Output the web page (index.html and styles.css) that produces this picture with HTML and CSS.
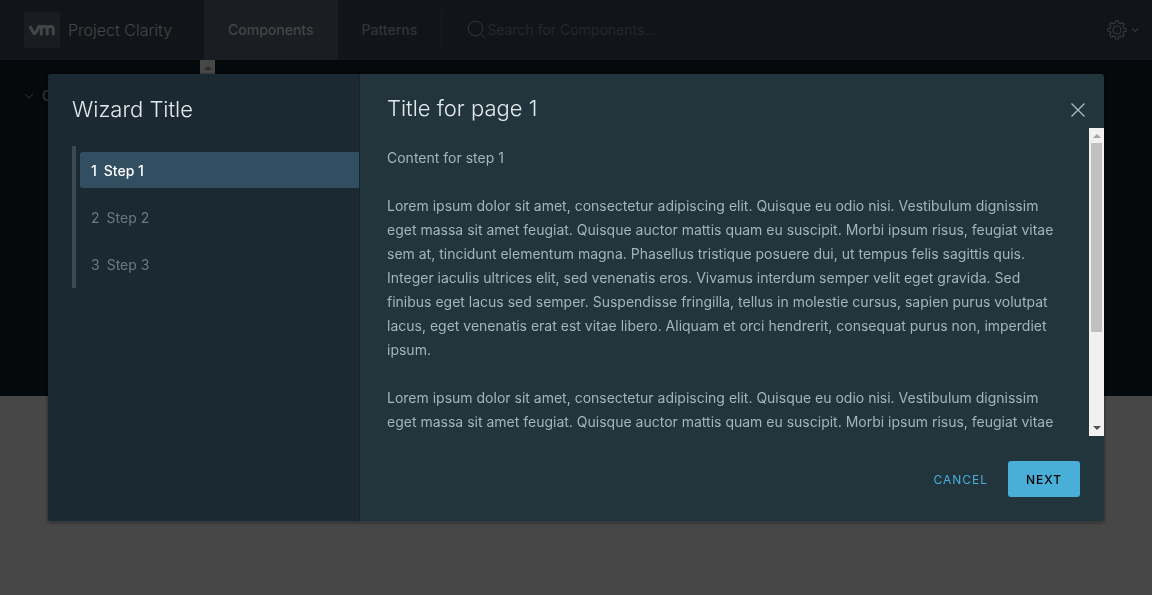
FILE: index.html
```
<!DOCTYPE html>
<html lang="en">
<head>
<meta charset="utf-8">
<meta name="viewport" content="width=device-width, initial-scale=1">
<title>Project Clarity</title>
<link rel="stylesheet" href="styles.css">
</head>
<body>
<header class="header">
  <a class="brand" href="#">
    <span class="logo">
      <svg viewBox="0 0 36 36" width="36" height="36" aria-hidden="true"><path d="M6.500 15.200L9.500 21Q10.500 22.500 11.500 21L14.900 14.600Q15.500 13.900 16.600 14.600Q17.200 15 17.200 16V22M17.200 17.500Q17.200 14.600 20 14.600H20.600Q23.200 14.600 23.200 17V22M23.200 17.500Q23.200 14.600 26 14.600Q29.300 14.600 29.300 17.500V22"/></svg>
    </span>
    <span class="brand-name">Project Clarity</span>
  </a>
  <nav class="header-nav">
    <a class="nav-link active" href="#">Components</a>
    <a class="nav-link" href="#">Patterns</a>
  </nav>
  <label class="search">
    <svg viewBox="0 0 20 20" width="20" height="20" aria-hidden="true"><circle cx="8.500" cy="8.500" r="7.300"/><path d="M13.800 14l4.500 4.800"/></svg>
    <input type="search" placeholder="Search for Components..." aria-label="Search for Components">
  </label>
  <button class="settings" type="button" aria-label="Settings">
    <svg viewBox="0 0 20 20" width="20" height="20" aria-hidden="true"><path d="M8.700 .8h2.600l.5 2.300 1.600.7 2-1.300 1.900 1.900-1.300 2 .7 1.600 2.400.6v2.600l-2.400.5-.7 1.700 1.300 2-1.900 1.800-2-1.300-1.600.7-.5 2.400H8.700l-.6-2.400-1.600-.7-2 1.300-1.900-1.800 1.300-2-.7-1.700-2.300-.5V8.600l2.300-.6.7-1.600-1.300-2 1.900-1.900 2 1.300 1.600-.7z"/><circle cx="10" cy="10" r="4"/></svg>
    <svg viewBox="0 0 8 8" width="8" height="8" aria-hidden="true"><path d="M1 2.500l3 3 3-3"/></svg>
  </button>
</header>
<main class="workspace">
  <aside class="sidenav">
    <button class="group" type="button">
      <svg viewBox="0 0 10 10" width="10" height="10" aria-hidden="true"><path d="M1 3l4 4 4-4"/></svg>
      <span>C</span>
    </button>
  </aside>
  <div class="side-scroll"><span class="arrow arrow-up"></span></div>
</main>
<div class="overlay">
  <section class="wizard" role="dialog" aria-modal="true" aria-labelledby="wizard-title">
    <aside class="stepnav">
      <h1 class="title" id="wizard-title">Wizard Title</h1>
      <ol class="steps">
        <li><button class="step current" type="button" aria-current="step"><span>1</span><span>Step 1</span></button></li>
        <li><button class="step" type="button" disabled><span>2</span><span>Step 2</span></button></li>
        <li><button class="step" type="button" disabled><span>3</span><span>Step 3</span></button></li>
      </ol>
    </aside>
    <div class="page">
      <div class="page-head">
        <h2 class="title">Title for page 1</h2>
        <button class="close" type="button" aria-label="Close">
          <svg viewBox="0 0 16 16" width="16" height="16" aria-hidden="true"><path d="M1.500 1.500l13 13M14.500 1.500l-13 13"/></svg>
        </button>
      </div>
      <div class="page-body">
        <div class="content">
          <p>Content for step 1</p>
          <p>Lorem ipsum dolor sit amet, consectetur adipiscing elit. Quisque eu odio nisi. Vestibulum dignissim eget massa sit amet feugiat. Quisque auctor mattis quam eu suscipit. Morbi ipsum risus, feugiat vitae sem at, tincidunt elementum magna. Phasellus tristique posuere dui, ut tempus felis sagittis quis. Integer iaculis ultrices elit, sed venenatis eros. Vivamus interdum semper velit eget gravida. Sed finibus eget lacus sed semper. Suspendisse fringilla, tellus in molestie cursus, sapien purus volutpat lacus, eget venenatis erat est vitae libero. Aliquam et orci hendrerit, consequat purus non, imperdiet ipsum.</p>
          <p>Lorem ipsum dolor sit amet, consectetur adipiscing elit. Quisque eu odio nisi. Vestibulum dignissim eget massa sit amet feugiat. Quisque auctor mattis quam eu suscipit. Morbi ipsum risus, feugiat vitae</p>
        </div>
        <div class="scrollbar" aria-hidden="true">
          <span class="arrow arrow-up"></span>
          <div class="track"><div class="thumb"></div></div>
          <span class="arrow arrow-down"></span>
        </div>
      </div>
      <footer class="page-foot">
        <button class="btn btn-link" type="button">Cancel</button>
        <button class="btn btn-primary" type="button">Next</button>
      </footer>
    </div>
  </section>
</div>
</body>
</html>
```
FILE: styles.css
```
* { box-sizing: border-box; }
body {
  margin: 0;
  min-height: 100vh;
  overflow: hidden;
  background: #474747;
  font: 14px/24px Inter, "Open Sans", sans-serif;
}
button, input { font: inherit; border: 0; background: none; padding: 0; margin: 0; color: inherit; }
a { color: inherit; text-decoration: none; }
h1, h2, p, ol { margin: 0; padding: 0; list-style: none; font-weight: 400; }
svg { display: block; flex: none; fill: none; stroke: currentColor; }

.header { display: flex; height: 60px; background: #11151a; color: #454545; }
.brand { display: flex; align-items: center; gap: 8px; width: 204px; padding-left: 24px; }
.logo { border-radius: 3px; background: #191d22; }
.logo svg { stroke-width: 3; stroke-linejoin: round; stroke-linecap: round; }
.brand-name { font-size: 16px; font-weight: 300; white-space: nowrap; }
.header-nav { display: flex; }
.nav-link { display: flex; align-items: center; padding: 0 24px; font-weight: 500; color: #313437; }
.nav-link.active { background: #1a1d22; color: #454545; }
.search {
  display: flex;
  flex: 1;
  align-items: center;
  margin: 10px 0;
  padding-left: 25px;
  border-left: 1px solid #191c20;
  color: #34373a;
}
.search input { flex: 1; outline: 0; }
.search input::placeholder { color: #24282b; opacity: 1; }
.settings { display: flex; align-items: center; gap: 4px; padding: 0 13px; color: #34383b; }
.settings svg { stroke-width: 1.2; }

.workspace { display: flex; height: 336px; background: #05090c; color: #333638; }
.sidenav { width: 200px; padding: 24px; overflow: hidden; }
.group { display: flex; align-items: center; gap: 8px; font-weight: 500; }
.side-scroll { width: 15px; background: #474747; color: #2b2b2b; }

.arrow { display: flex; align-items: center; justify-content: center; width: 15px; height: 15px; }
.arrow::before { content: ""; border: 4px solid transparent; }
.arrow-up::before { border-top: 0; border-bottom-color: currentColor; }
.arrow-down::before { border-bottom: 0; border-top-color: currentColor; }

.overlay { position: fixed; inset: 0; display: flex; align-items: center; padding: 0 48px; }
.wizard {
  display: flex;
  flex: 1;
  height: 75vh;
  border-radius: 3px;
  background: #22343c;
  box-shadow: 0 1px 2px 2px rgba(0, 0, 0, .2);
  overflow: hidden;
}
.stepnav { flex: none; width: 312px; padding: 23px 0 24px 24px; background: #1b2a32; border-right: 1px solid #16232a; }
.title { font-size: 22px; font-weight: 300; line-height: 24px; color: #e3e8eb; }
.steps { display: grid; gap: 11px; margin-top: 25px; padding: 6px 0 6px 4px; border-left: 4px solid #3c494f; }
.step { display: flex; align-items: center; gap: 7px; width: 100%; height: 36px; padding: 2px 0 0 11px; border-radius: 3px 0 0 3px; color: #6c787e; }
.step.current { background: #324f61; color: #fff; font-weight: 500; }

.page { display: flex; flex: 1; flex-direction: column; min-width: 0; padding-left: 27px; }
.page-head { display: flex; justify-content: space-between; padding: 22px 18px 8px 0; }
.close { padding-top: 4px; color: #adbbc4; }
.close svg { stroke-width: 1.3; }
.page-body { display: flex; flex: 1; min-height: 0; }
.content { flex: 1; padding: 18px 24px 0 0; overflow: hidden; color: #a5b3bb; }
.content p + p { margin-top: 24px; }
.scrollbar { display: flex; flex-direction: column; width: 15px; background: #f1f1f1; color: #505050; }
.scrollbar .arrow-up { color: #a3a3a3; }
.track { flex: 1; padding: 0 2px; }
.thumb { height: 68%; background: #c1c1c1; }
.page-foot { display: flex; justify-content: flex-end; gap: 4px; padding: 25px 24px 24px; }
.btn { min-width: 72px; height: 36px; padding: 2px 16px 0; border-radius: 3px; font: 400 12px/24px Inter, "Open Sans", sans-serif; letter-spacing: 1px; text-transform: uppercase; }
.btn-link { color: #49afd9; }
.btn-primary { background: #49afd9; color: #000; font-weight: 500; }
```
